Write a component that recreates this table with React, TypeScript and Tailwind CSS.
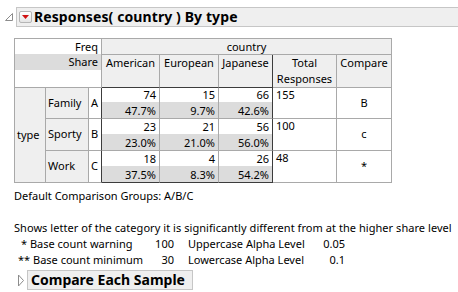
const line = "border-[#a9a9a9]";

function Disclosure() {
  return (
    <svg width="10" height="10" viewBox="0 0 10 10" className="shrink-0">
      <path d="M8.5 1.5 L8.5 8.5 L1.5 8.5 Z" fill="white" stroke="#8c8c8c" strokeWidth="1" />
    </svg>
  );
}

function RedMenu() {
  return (
    <div className="w-[13px] h-[12px] border border-[#b5b5b5] rounded-[2px] bg-gradient-to-b from-white to-[#e4e4e4] flex items-center justify-center shrink-0">
      <svg width="7" height="4" viewBox="0 0 7 4">
        <path d="M0 0 L7 0 L3.5 4 Z" fill="#d01010" />
      </svg>
    </div>
  );
}

function DataCell({ n, p, last }: { n: string; p: string; last?: boolean }) {
  return (
    <div className={"flex flex-col border-r " + (last ? "border-r-[#3c3c3c] " : "border-r-[#a9a9a9] ") + "border-b border-b-[#a9a9a9]"}>
      <div className="flex-1 flex items-center justify-end pr-[3px] leading-[14px] bg-white">{n}</div>
      <div className="h-[16px] flex items-end justify-end pr-[3px] leading-[15px] bg-[#dcdcdc]">{p}</div>
    </div>
  );
}

export default function App() {
  const rows = [
    { name: "Family", l: "A", d: [["74", "47.7%"], ["15", "9.7%"], ["66", "42.6%"]], t: "155", c: "B" },
    { name: "Sporty", l: "B", d: [["23", "23.0%"], ["21", "21.0%"], ["56", "56.0%"]], t: "100", c: "c" },
    { name: "Work", l: "C", d: [["18", "37.5%"], ["4", "8.3%"], ["26", "54.2%"]], t: "48", c: "*" },
  ];
  return (
    <div className="w-[458px] h-[292px] bg-white overflow-hidden font-['Noto_Sans',sans-serif] text-[11px] text-black">
      {/* title */}
      <div className="flex items-center pt-[7px]">
        <div className="w-[16px] pl-[4px] flex items-center">
          <Disclosure />
        </div>
        <div className="flex-1 h-[20px] border border-r-0 border-[#c6c6c6] bg-[#efefef] flex items-center pl-[2px] gap-[2px]">
          <RedMenu />
          <span className="font-bold text-[14px] leading-[18px] tracking-[0.1px]">Responses( country ) By type</span>
        </div>
      </div>

      {/* table */}
      <div className={"ml-[14px] mt-[11px] w-[378px] grid grid-cols-[31px_43px_13px_58px_59px_54px_64px_55px] grid-rows-[16px_33px_31px_32px_32px] border-l border-t " + line}>
        <div className={"col-span-3 row-span-2 border-r border-b flex flex-col " + line}>
          <div className="h-[15px] leading-[15px] text-right pr-[3px]">Freq</div>
          <div className="h-[16px] leading-[16px] text-right pr-[3px] bg-[#dcdcdc]">Share</div>
        </div>
        <div className={"col-span-5 border-r border-b bg-[#efefef] text-center leading-[15px] " + line}>country</div>
        <div className="border-r border-r-[#a9a9a9] border-b border-b-[#3c3c3c] bg-[#efefef] text-center leading-[16px]">American</div>
        <div className="border-r border-r-[#a9a9a9] border-b border-b-[#3c3c3c] bg-[#efefef] text-center leading-[16px]">European</div>
        <div className="border-r border-r-[#3c3c3c] border-b border-b-[#3c3c3c] bg-[#efefef] text-center leading-[16px]">Japanese</div>
        <div className={"border-r border-b bg-[#efefef] text-center leading-[16px] " + line}>
          Total
          <br />
          Responses
        </div>
        <div className={"border-r border-b bg-[#efefef] text-center leading-[16px] " + line}>Compare</div>

        <div className={"row-span-3 border-r border-b bg-[#efefef] flex items-center pl-[2px] " + line}>type</div>
        {rows.map((r, i) => (
          <div key={r.name} className="contents">
            <div className={"border-r border-b bg-[#efefef] flex items-center pl-[2px] " + line}>{r.name}</div>
            <div className="border-r border-r-[#3c3c3c] border-b border-b-[#a9a9a9] bg-white flex items-center pl-[2px]">{r.l}</div>
            {r.d.map((v, j) => (
              <div key={j} className={i === 2 ? "[&>div]:border-b-[#3c3c3c] contents" : "contents"}>
                <DataCell n={v[0]} p={v[1]} last={j === 2} />
              </div>
            ))}
            <div className={"border-r border-b bg-white pl-[3px] leading-[14px] " + line}>{r.t}</div>
            <div className={"border-r border-b bg-white flex items-center justify-center " + line}>{r.c}</div>
          </div>
        ))}
      </div>

      {/* notes */}
      <div className="ml-[14px] mt-[5px] leading-[16px]">
        <div>Default Comparison Groups: A/B/C</div>
        <div className="h-[16px]" />
        <div className="tracking-[0.05px]">Shows letter of the category it is significantly different from at the higher share level</div>
        <div className="grid grid-cols-[140px_20px_14px_120px_37px]">
          <div className="pl-[7px]">* Base count warning</div>
          <div className="text-right">100</div>
          <div />
          <div>Uppercase Alpha Level</div>
          <div className="text-right">0.05</div>
          <div className="pl-[4px]">** Base count minimum</div>
          <div className="text-right">30</div>
          <div />
          <div>Lowercase Alpha Level</div>
          <div className="text-right">0.1</div>
        </div>
      </div>
      <div className="flex items-center mt-[2px] ml-[17px] gap-[2px]">
        <svg width="8" height="13" viewBox="0 0 8 13" className="shrink-0">
          <path d="M1.5 1 L6.5 6.5 L1.5 12 Z" fill="white" stroke="#8c8c8c" strokeWidth="1" />
        </svg>
        <div className="w-[166px] h-[20px] border border-[#c6c6c6] bg-[#efefef] flex items-center pl-[3px]">
          <span className="font-bold text-[14px] leading-[18px]">Compare Each Sample</span>
        </div>
      </div>
    </div>
  );
}
